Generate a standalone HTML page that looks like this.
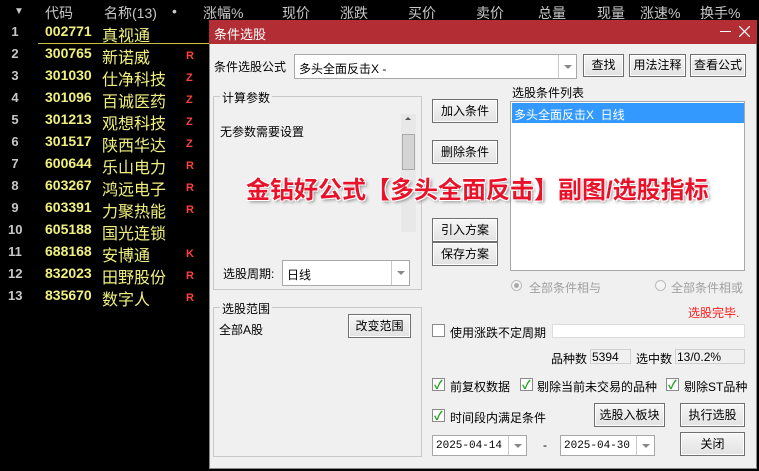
<!DOCTYPE html>
<html><head><meta charset="utf-8"><style>
*{margin:0;padding:0;box-sizing:border-box}
body{width:759px;height:471px;background:#000;position:relative;overflow:hidden;font-family:"Liberation Sans","Noto Sans CJK SC",sans-serif;font-size:12px;color:#000}
.a{position:absolute;white-space:nowrap}
.h{color:#c8c8c8;font-size:14px;top:3px}
.n{color:#c8c8c8;font-size:13px;font-weight:bold;left:8px;width:14px;text-align:center}
.c{color:#f0f080;font-size:14px;font-weight:bold;left:45px}
.m{color:#f0f080;font-size:16px;left:102px}
.f{color:#ff4040;font-size:11px;font-weight:bold;left:186px}
.btn{position:absolute;background:linear-gradient(#f6f6f6,#e2e2e2);border:1px solid #707070;box-shadow:inset 0 0 0 1px #fff;text-align:center;font-size:12px}
.box{position:absolute;background:#fff;border:1px solid #a8a8a8}
.grp{position:absolute;border:1px solid #c8c8c8}
.gt{position:absolute;background:#f0f0f0;padding:0 2px}
.cb{position:absolute;width:13px;height:13px;border:1px solid #8a8a8a;background:#fff}
.cb.k::after{content:"✓";position:absolute;left:1px;top:-3px;color:#21a121;font-size:12px;font-weight:bold}
.dd{position:absolute;right:0;top:0;bottom:0;width:18px;border-left:1px solid #c8c8c8}
.dd::after{content:"";position:absolute;left:5px;top:50%;margin-top:-2px;border:4px solid transparent;border-top:4px solid #888;border-bottom:0}
.dt{position:absolute;left:3px;top:4px;font-family:'Liberation Mono',monospace;font-size:11px}
</style></head><body>
<div class="a" style="left:14px;top:6px;color:#c8c8c8;font-size:10px">▼</div>
<div class="a h" style="left:45px">代码</div>
<div class="a h" style="left:104px">名称(13)</div>
<div class="a h" style="left:172px">•</div>
<div class="a h" style="left:203px">涨幅%</div>
<div class="a h" style="left:282px">现价</div>
<div class="a h" style="left:340px">涨跌</div>
<div class="a h" style="left:408px">买价</div>
<div class="a h" style="left:476px">卖价</div>
<div class="a h" style="left:538px">总量</div>
<div class="a h" style="left:597px">现量</div>
<div class="a h" style="left:640px">涨速%</div>
<div class="a h" style="left:700px">换手%</div>
<div class="a" style="left:38px;top:43px;width:172px;height:1px;background:#c8c040"></div>

<div class="a n" style="top:24px">1</div><div class="a c" style="top:23px">002771</div><div class="a m" style="top:22px">真视通</div>
<div class="a n" style="top:46px">2</div><div class="a c" style="top:45px">300765</div><div class="a m" style="top:44px">新诺威</div><div class="a f" style="top:50px">R</div>
<div class="a n" style="top:68px">3</div><div class="a c" style="top:67px">301030</div><div class="a m" style="top:66px">仕净科技</div><div class="a f" style="top:72px">Z</div>
<div class="a n" style="top:90px">4</div><div class="a c" style="top:89px">301096</div><div class="a m" style="top:88px">百诚医药</div><div class="a f" style="top:94px">Z</div>
<div class="a n" style="top:112px">5</div><div class="a c" style="top:111px">301213</div><div class="a m" style="top:110px">观想科技</div><div class="a f" style="top:116px">Z</div>
<div class="a n" style="top:134px">6</div><div class="a c" style="top:133px">301517</div><div class="a m" style="top:132px">陕西华达</div><div class="a f" style="top:138px">Z</div>
<div class="a n" style="top:156px">7</div><div class="a c" style="top:155px">600644</div><div class="a m" style="top:154px">乐山电力</div><div class="a f" style="top:160px">R</div>
<div class="a n" style="top:178px">8</div><div class="a c" style="top:177px">603267</div><div class="a m" style="top:176px">鸿远电子</div><div class="a f" style="top:182px">R</div>
<div class="a n" style="top:200px">9</div><div class="a c" style="top:199px">603391</div><div class="a m" style="top:198px">力聚热能</div><div class="a f" style="top:204px">R</div>
<div class="a n" style="top:222px">10</div><div class="a c" style="top:221px">605188</div><div class="a m" style="top:220px">国光连锁</div>
<div class="a n" style="top:244px">11</div><div class="a c" style="top:243px">688168</div><div class="a m" style="top:242px">安博通</div><div class="a f" style="top:248px">K</div>
<div class="a n" style="top:266px">12</div><div class="a c" style="top:265px">832023</div><div class="a m" style="top:264px">田野股份</div><div class="a f" style="top:270px">R</div>
<div class="a n" style="top:288px">13</div><div class="a c" style="top:287px">835670</div><div class="a m" style="top:286px">数字人</div><div class="a f" style="top:292px">R</div>

<!-- dialog -->
<div class="a" style="left:209px;top:20px;width:548px;height:449px;background:#f0f0f0;border:1px solid #888"></div>
<div class="a" style="left:209px;top:20px;width:548px;height:24px;background:#b32d35"></div>
<div class="a" style="left:214px;top:24px;color:#fff;font-size:13px">条件选股</div>
<div class="a" style="left:720px;top:31px;width:11px;height:1px;background:#fff"></div>
<svg class="a" style="left:739px;top:26px" width="11" height="11"><path d="M0 0L11 11M11 0L0 11" stroke="#fff" stroke-width="1.2"/></svg>

<div class="a" style="left:214px;top:58px">条件选股公式</div>
<div class="box" style="left:294px;top:54px;width:283px;height:25px"><span class="a" style="left:4px;top:5px">多头全面反击X -</span><div class="dd"></div></div>
<div class="btn" style="left:583px;top:54px;width:41px;height:23px;line-height:21px">查找</div>
<div class="btn" style="left:629px;top:54px;width:57px;height:23px;line-height:21px">用法注释</div>
<div class="btn" style="left:690px;top:54px;width:56px;height:23px;line-height:21px">查看公式</div>

<div class="grp" style="left:213px;top:96px;width:209px;height:194px"></div>
<div class="gt" style="left:220px;top:89px">计算参数</div>
<div class="a" style="left:220px;top:123px">无参数需要设置</div>
<div class="a" style="left:401px;top:114px;width:15px;height:118px;background:#e8e8e8"></div>
<div class="a" style="left:405px;top:117px;border:3px solid transparent;border-bottom:3px solid #555;border-top:0"></div>
<div class="a" style="left:402px;top:134px;width:13px;height:36px;background:#d4d4d4;border:1px solid #aaa"></div>
<div class="a" style="left:223px;top:265px">选股周期:</div>
<div class="box" style="left:282px;top:260px;width:128px;height:26px"><span class="a" style="left:4px;top:5px">日线</span><div class="dd"></div></div>

<div class="btn" style="left:432px;top:99px;width:66px;height:24px;line-height:22px">加入条件</div>
<div class="btn" style="left:432px;top:140px;width:66px;height:24px;line-height:22px">删除条件</div>
<div class="btn" style="left:432px;top:218px;width:66px;height:24px;line-height:22px">引入方案</div>
<div class="btn" style="left:432px;top:242px;width:66px;height:24px;line-height:22px">保存方案</div>

<div class="a" style="left:512px;top:84px">选股条件列表</div>
<div class="box" style="left:510px;top:101px;width:235px;height:170px"></div>
<div class="a" style="left:512px;top:103px;width:232px;height:20px;background:#3399ff"></div>
<div class="a" style="left:514px;top:106px;color:#fff">多头全面反击X&nbsp; 日线</div>

<div class="a" style="left:511px;top:280px;width:11px;height:11px;border-radius:50%;border:1px solid #bbb;background:#f4f4f4"></div>
<div class="a" style="left:514px;top:283px;width:5px;height:5px;border-radius:50%;background:#aaa"></div>
<div class="a" style="left:529px;top:279px;color:#a0a0a0">全部条件相与</div>
<div class="a" style="left:655px;top:280px;width:11px;height:11px;border-radius:50%;border:1px solid #bbb;background:#f4f4f4"></div>
<div class="a" style="left:671px;top:279px;color:#a0a0a0">全部条件相或</div>
<div class="a" style="left:688px;top:304px;color:#ff1a1a">选股完毕.</div>

<div class="grp" style="left:213px;top:307px;width:209px;height:150px"></div>
<div class="gt" style="left:220px;top:300px">选股范围</div>
<div class="a" style="left:219px;top:321px">全部A股</div>
<div class="btn" style="left:348px;top:314px;width:63px;height:24px;line-height:22px">改变范围</div>

<div class="cb" style="left:432px;top:324px"></div>
<div class="a" style="left:450px;top:324px">使用涨跌不定周期</div>
<div class="box" style="left:552px;top:324px;width:193px;height:14px;border-color:#ddd"></div>
<div class="a" style="left:551px;top:350px">品种数</div>
<div class="a" style="left:590px;top:349px;width:41px;height:15px;border:1px solid #d0d0d0"><span class="a" style="left:1px;top:0">5394</span></div>
<div class="a" style="left:636px;top:350px">选中数</div>
<div class="a" style="left:675px;top:349px;width:70px;height:15px;border:1px solid #d0d0d0"><span class="a" style="left:1px;top:0">13/0.2%</span></div>

<div class="cb k" style="left:432px;top:378px"></div><div class="a" style="left:450px;top:378px">前复权数据</div>
<div class="cb k" style="left:520px;top:378px"></div><div class="a" style="left:537px;top:378px">剔除当前未交易的品种</div>
<div class="cb k" style="left:666px;top:378px"></div><div class="a" style="left:684px;top:378px">剔除ST品种</div>

<div class="cb k" style="left:432px;top:409px"></div><div class="a" style="left:450px;top:409px">时间段内满足条件</div>
<div class="btn" style="left:594px;top:403px;width:71px;height:24px;line-height:22px">选股入板块</div>
<div class="btn" style="left:680px;top:403px;width:65px;height:24px;line-height:22px">执行选股</div>

<div class="box" style="left:432px;top:435px;width:95px;height:21px"><span class="dt">2025-04-14</span><div class="dd"></div></div>
<div class="a" style="left:543px;top:438px">-</div>
<div class="box" style="left:560px;top:435px;width:95px;height:21px"><span class="dt">2025-04-30</span><div class="dd"></div></div>
<div class="btn" style="left:680px;top:432px;width:65px;height:24px;line-height:22px">关闭</div>

<div class="a" style="left:246px;top:170px;font-size:24px;font-weight:bold;color:#e8132a;text-shadow:-1px -1px 0 #fff,1px -1px 0 #fff,-1px 1px 0 #fff,1px 1px 0 #fff,2px 2px 3px #888">金钻好公式【多头全面反击】副图/选股指标</div>
</body></html>
